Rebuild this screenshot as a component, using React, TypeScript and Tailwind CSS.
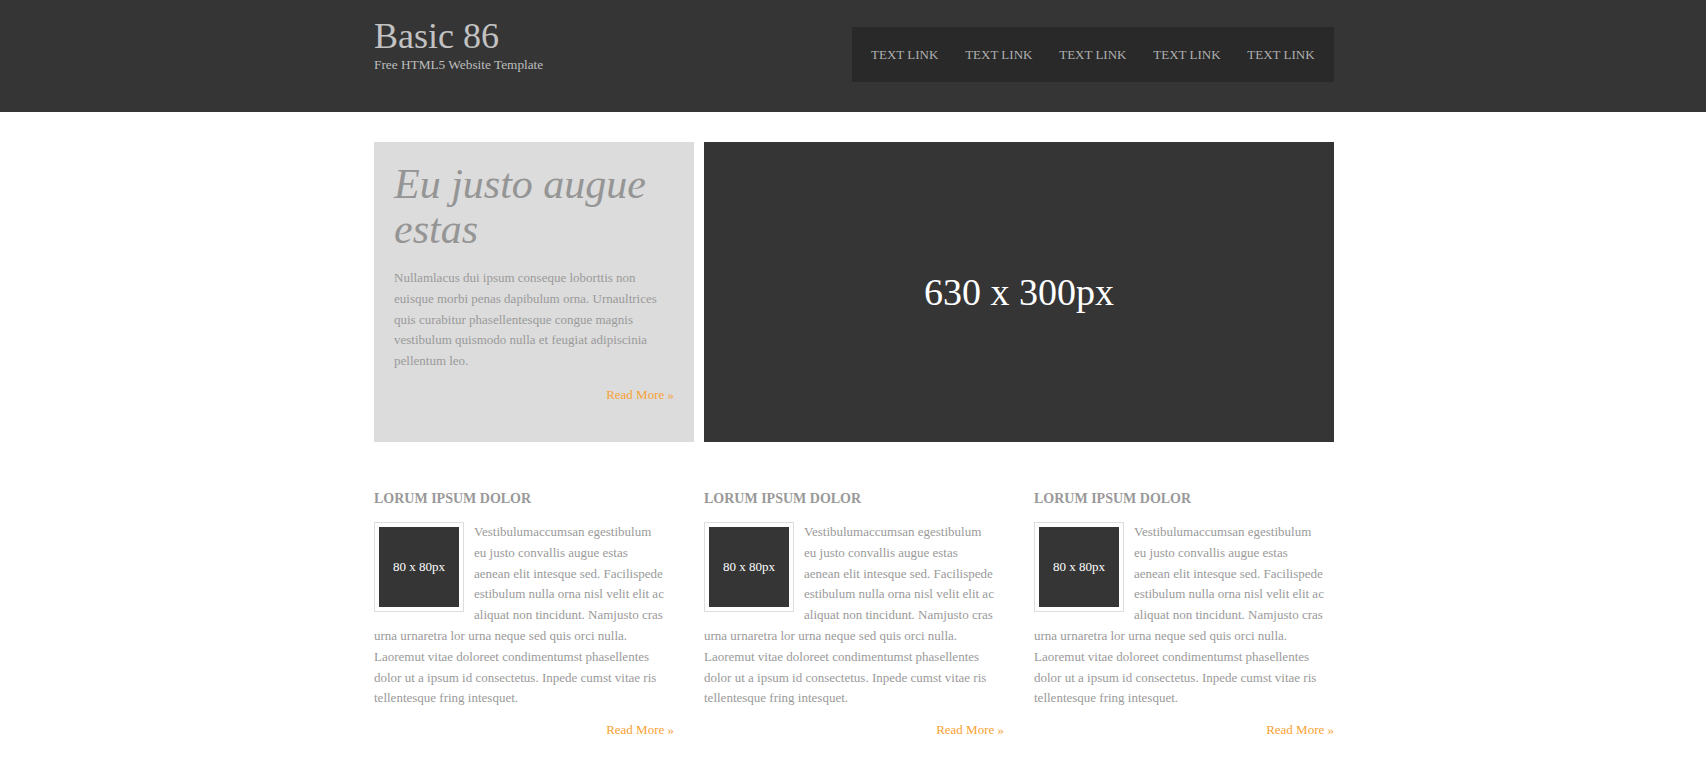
import React from "react";

const serif = { fontFamily: '"Liberation Serif", "Times New Roman", serif' };

const navLinks = ["TEXT LINK", "TEXT LINK", "TEXT LINK", "TEXT LINK", "TEXT LINK"];

const columnLines = {
  beside: [
    "Vestibulumaccumsan egestibulum",
    "eu justo convallis augue estas",
    "aenean elit intesque sed. Facilispede",
    "estibulum nulla orna nisl velit elit ac",
    "aliquat non tincidunt. Namjusto cras",
  ],
  below: [
    "urna urnaretra lor urna neque sed quis orci nulla.",
    "Laoremut vitae doloreet condimentumst phasellentes",
    "dolor ut a ipsum id consectetus. Inpede cumst vitae ris",
    "tellentesque fring intesquet.",
  ],
};

const heroLines = [
  "Nullamlacus dui ipsum conseque loborttis non",
  "euisque morbi penas dapibulum orna. Urnaultrices",
  "quis curabitur phasellentesque congue magnis",
  "vestibulum quismodo nulla et feugiat adipiscinia",
  "pellentum leo.",
];

const ReadMore = () => (
  <div className="text-right text-[13px] leading-[20px] text-[#f7a233]">
    <a href="#">Read More &raquo;</a>
  </div>
);

const Column = () => (
  <div className="w-[300px]">
    <h3 className="text-[14px] leading-[18px] font-bold text-[#999999]">LORUM IPSUM DOLOR</h3>
    <div className="mt-[14px] text-[13px] leading-[20.8px] text-[#9a9a9a]">
      <div className="float-left mr-[10px] border border-[#dddddd] p-[4px]">
        <div className="flex h-[80px] w-[80px] items-center justify-center bg-[#353535] text-[13px] text-white">
          80 x 80px
        </div>
      </div>
      <p>
        {columnLines.beside.map((l, i) => (
          <React.Fragment key={i}>
            {l}
            <br />
          </React.Fragment>
        ))}
        {columnLines.below.map((l, i) => (
          <React.Fragment key={i}>
            {l}
            {i < columnLines.below.length - 1 && <br />}
          </React.Fragment>
        ))}
      </p>
    </div>
    <div className="mt-[11px]">
      <ReadMore />
    </div>
  </div>
);

export default function App() {
  return (
    <div className="min-h-[778px] bg-white" style={serif}>
      <header className="h-[112px] bg-[#353535]">
        <div className="mx-auto flex w-[962px] justify-between pl-[2px]">
          <div className="pt-[18px]">
            <h1 className="text-[36px] leading-[36px] text-[#c2c2c2]">Basic 86</h1>
            <p className="mt-[3px] text-[13.3px] leading-[16px] text-[#bdbdbd]">Free HTML5 Website Template</p>
          </div>
          <nav className="mt-[27px] flex h-[55px] items-center bg-[#292929] px-[6px]">
            {navLinks.map((l, i) => (
              <a key={i} href="#" className="px-[13.4px] text-[13px] text-[#b0b0b0]">
                {l}
              </a>
            ))}
          </nav>
        </div>
      </header>

      <main className="mx-auto w-[962px] pl-[2px]">
        <section className="mt-[30px] flex h-[300px] gap-[10px]">
          <div className="w-[320px] bg-[#dcdcdc] px-[20px] pt-[20px]">
            <h2 className="text-[42px] italic leading-[45px] text-[#959595]">
              Eu justo augue
              <br />
              estas
            </h2>
            <p className="mt-[16px] text-[13px] leading-[20.8px] text-[#9a9a9a]">
              {heroLines.map((l, i) => (
                <React.Fragment key={i}>
                  {l}
                  {i < heroLines.length - 1 && <br />}
                </React.Fragment>
              ))}
            </p>
            <div className="mt-[13px]">
              <ReadMore />
            </div>
          </div>
          <div className="flex flex-1 items-center justify-center bg-[#353535]">
            <span className="text-[38px] text-white">630 x 300px</span>
          </div>
        </section>

        <section className="mt-[48px] flex justify-between">
          <Column />
          <Column />
          <Column />
        </section>
      </main>
    </div>
  );
}
